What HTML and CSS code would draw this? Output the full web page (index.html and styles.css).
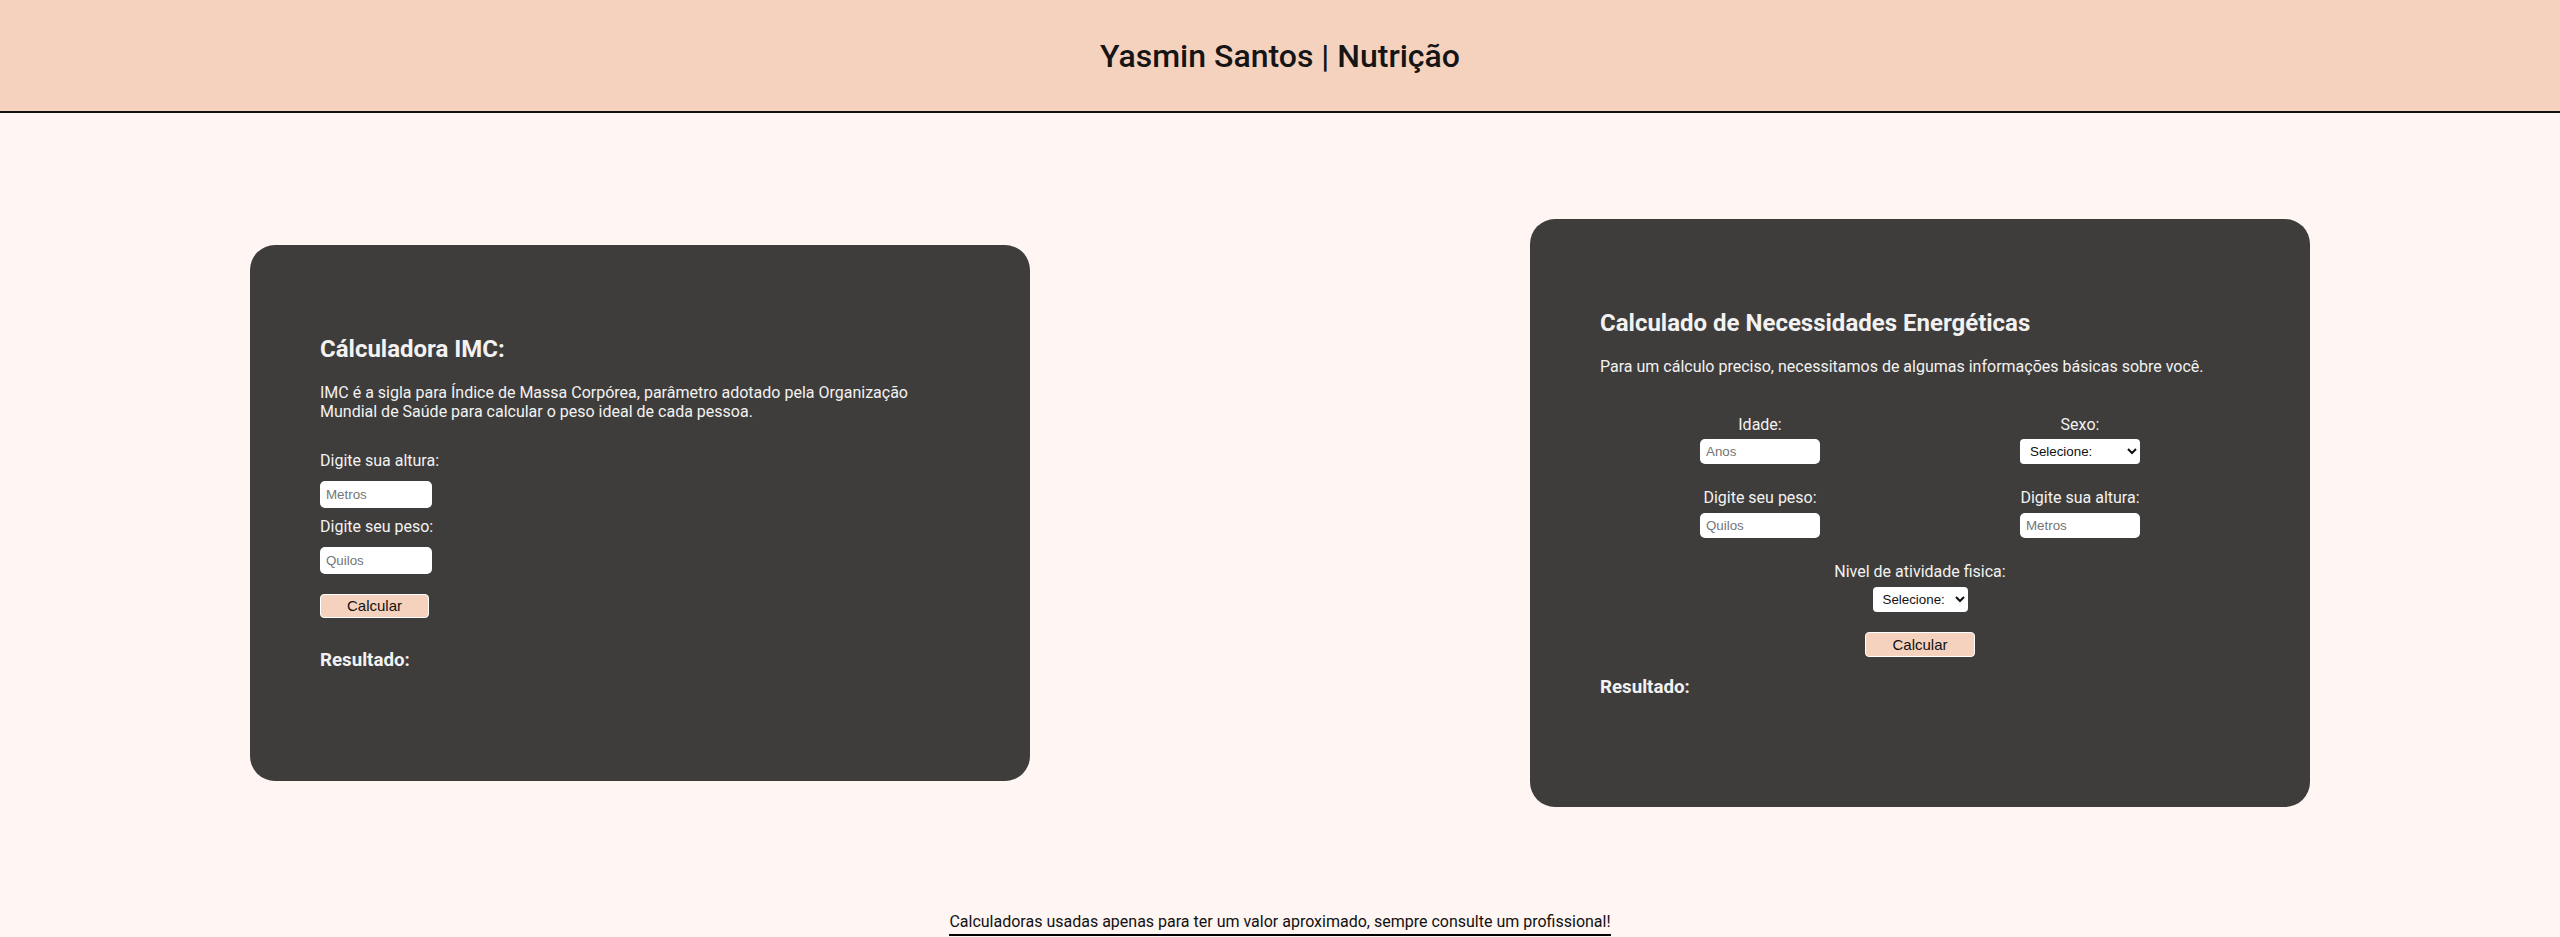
FILE: index.html
```html
<!DOCTYPE html>
<html lang="pt-BR">
<head>
<meta charset="utf-8">
<title>Yasmin Santos | Nutrição</title>
<link rel="stylesheet" href="styles.css">
</head>
<body>
<header class="topo">
  <h1 class="marca">Yasmin Santos | Nutrição</h1>
</header>
<main class="conteudo">
  <section class="cartao cartao-imc">
    <h2 class="cartao-titulo">Cálculadora IMC:</h2>
    <p class="cartao-texto">IMC é a sigla para Índice de Massa Corpórea, parâmetro adotado pela Organização Mundial de Saúde para calcular o peso ideal de cada pessoa.</p>
    <form class="form-imc">
      <label class="rotulo">Digite sua altura:</label>
      <input class="campo campo-imc" type="text" placeholder="Metros">
      <label class="rotulo">Digite seu peso:</label>
      <input class="campo campo-imc" type="text" placeholder="Quilos">
      <button class="botao" type="button">Calcular</button>
    </form>
    <h3 class="resultado resultado-imc">Resultado:</h3>
    <div class="resultado-valor"></div>
  </section>

  <section class="cartao cartao-energia">
    <h2 class="cartao-titulo">Calculado de Necessidades Energéticas</h2>
    <p class="cartao-texto">Para um cálculo preciso, necessitamos de algumas informações básicas sobre você.</p>
    <form class="form-energia">
      <div class="grade">
        <div class="grupo">
          <label class="rotulo">Idade:</label>
          <input class="campo campo-energia" type="text" placeholder="Anos">
        </div>
        <div class="grupo">
          <label class="rotulo">Sexo:</label>
          <select class="selecao selecao-larga">
            <option>Selecione:</option>
            <option>Feminino</option>
            <option>Masculino</option>
          </select>
        </div>
        <div class="grupo">
          <label class="rotulo">Digite seu peso:</label>
          <input class="campo campo-energia" type="text" placeholder="Quilos">
        </div>
        <div class="grupo">
          <label class="rotulo">Digite sua altura:</label>
          <input class="campo campo-energia" type="text" placeholder="Metros">
        </div>
      </div>
      <div class="grupo grupo-nivel">
        <label class="rotulo">Nivel de atividade fisica:</label>
        <select class="selecao">
          <option>Selecione:</option>
          <option>Sedentário</option>
          <option>Leve</option>
          <option>Moderado</option>
          <option>Intenso</option>
        </select>
      </div>
      <div class="linha-botao">
        <button class="botao" type="button">Calcular</button>
      </div>
    </form>
    <h3 class="resultado">Resultado:</h3>
    <div class="resultado-valor"></div>
  </section>
</main>
<footer class="rodape">
  <span class="aviso">Calculadoras usadas apenas para ter um valor aproximado, sempre consulte um profissional!</span>
</footer>
</body>
</html>
```

FILE: styles.css
```css
* {
  box-sizing: border-box;
}

html, body {
  margin: 0;
  padding: 0;
}

body {
  background: #fff6f3;
  font-family: Roboto, "Liberation Sans", Arial, sans-serif;
  color: #111111;
}

.topo {
  height: 113px;
  background: #f5d2be;
  border-bottom: 2px solid #111111;
  display: flex;
  align-items: center;
  justify-content: center;
}

.marca {
  margin: 0;
  font-size: 32px;
  font-weight: 500;
  color: #151515;
}

.conteudo {
  height: 800px;
  display: flex;
  align-items: center;
  justify-content: space-around;
}

.cartao {
  width: 780px;
  background: #3f3d3b;
  border-radius: 25px;
  padding: 70px 70px 70px;
  color: #f2f2f2;
}

.cartao-titulo {
  font-size: 24px;
  font-weight: 700;
  margin: 19.92px 0;
}

.cartao-texto {
  font-size: 16px;
  margin: 16px 0;
}

.form-imc {
  display: flex;
  flex-direction: column;
  align-items: flex-start;
  margin-top: 31px;
}

.rotulo {
  display: block;
  font-size: 16px;
  line-height: 18.75px;
}

.campo {
  border: none;
  background: #ffffff;
  border-radius: 5px;
  font-family: "Liberation Sans", Arial, sans-serif;
  font-size: 13.33px;
  padding: 0 6px;
  color: #111111;
}

.campo::placeholder {
  color: #757575;
}

.campo-imc {
  width: 112px;
  height: 27px;
  margin: 10px 0;
}

.form-imc .botao {
  margin-top: 10px;
}

.botao {
  width: 109px;
  height: 24px;
  background: #f5d2be;
  border: 1px solid #ffffff;
  border-radius: 4px;
  font-family: "Liberation Sans", Arial, sans-serif;
  font-size: 15px;
  color: #111111;
  padding: 0;
}

.resultado {
  font-size: 18.72px;
  font-weight: 700;
  margin: 18.72px 0;
}

.resultado-imc {
  margin-top: 31px;
}

.resultado-valor {
  height: 21px;
}

.form-energia {
  margin-top: 40px;
}

.grade {
  display: grid;
  grid-template-columns: 1fr 1fr;
  row-gap: 25px;
}

.grupo {
  display: flex;
  flex-direction: column;
  align-items: center;
  gap: 5px;
}

.campo-energia {
  width: 120px;
  height: 25px;
}

.selecao {
  height: 25px;
  border: none;
  border-radius: 4px;
  background: #ffffff;
  font-family: "Liberation Sans", Arial, sans-serif;
  font-size: 13.33px;
  color: #111111;
  padding: 0 4px 0 6px;
}

.selecao-larga {
  width: 120px;
}

.grupo-nivel {
  margin-top: 25px;
}

.linha-botao {
  display: flex;
  justify-content: center;
  margin-top: 20px;
}

.linha-botao .botao {
  width: 110px;
  height: 25px;
}

.rodape {
  display: flex;
  justify-content: center;
}

.aviso {
  font-size: 16px;
  line-height: 18.75px;
  color: #111111;
  border-bottom: 2px solid #000000;
  padding-bottom: 2px;
}
```
